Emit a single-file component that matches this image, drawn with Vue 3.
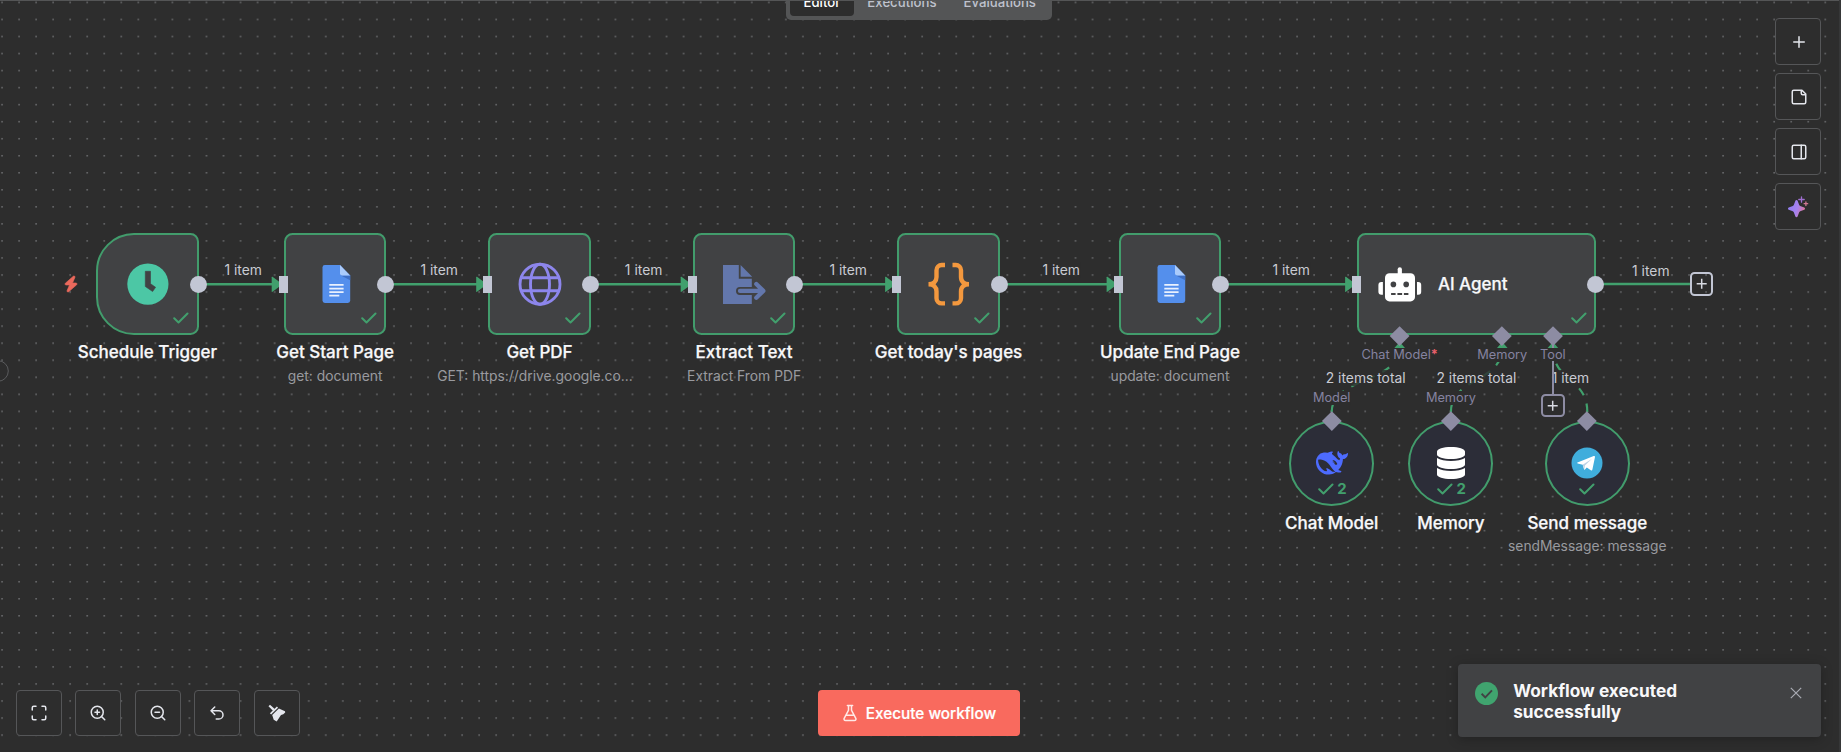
<script setup>
const nodes = [
  { id: 'schedule', x: 96.4, icon: 'clock', title: 'Schedule Trigger', trigger: true },
  { id: 'start', x: 284, icon: 'doc', title: 'Get Start Page', sub: 'get: document', input: true },
  { id: 'pdf', x: 488.4, icon: 'globe', title: 'Get PDF', sub: 'GET: https://drive.google.co...', input: true, clipped: true },
  { id: 'extract', x: 693, icon: 'export', title: 'Extract Text', sub: 'Extract From PDF', input: true },
  { id: 'today', x: 897.4, icon: 'braces', title: "Get today's pages", input: true },
  { id: 'end', x: 1118.9, icon: 'doc', title: 'Update End Page', sub: 'update: document', input: true },
]
const edges = [
  { from: 198.8, to: 284, label: 243.2 },
  { from: 386.2, to: 488.5, label: 439.2 },
  { from: 590.7, to: 693, label: 643.6 },
  { from: 795.2, to: 897.4, label: 848.2 },
  { from: 999.6, to: 1118.9, label: 1061.2 },
  { from: 1221.1, to: 1357.4, label: 1291.2 },
]
const ports = [
  { x: 1399.7, label: 'Chat Model', required: true },
  { x: 1502.3, label: 'Memory' },
  { x: 1552.9, label: 'Tool' },
]
const subNodes = [
  { id: 'chat', x: 1331.7, icon: 'whale', title: 'Chat Model', port: 'Model', runs: 2 },
  { id: 'memory', x: 1450.9, icon: 'database', title: 'Memory', port: 'Memory', runs: 2 },
  { id: 'send', x: 1587.3, icon: 'telegram', title: 'Send message', sub: 'sendMessage: message' },
]
const edgeLabels = [
  { x: 1365.7, y: 378, text: '2 items total' },
  { x: 1476.4, y: 378, text: '2 items total' },
  { x: 1570.4, y: 378, text: '1 item' },
  { x: 1650.8, y: 270.5, text: '1 item' },
]
const tabs = ['Editor', 'Executions', 'Evaluations']
</script>

<template>
  <main class="editor">
    <svg class="layer" width="1841" height="752">
      <defs>
        <pattern id="dots" x="1" y="1.6" width="17.04" height="17.04" patternUnits="userSpaceOnUse">
          <rect x="0.2" y="0.2" width="1.7" height="1.2" fill="#747578" />
        </pattern>
      </defs>
      <rect width="1841" height="751" fill="url(#dots)" />
      <circle cx="-2" cy="371" r="10.3" fill="#2d2d2d" stroke="#5a5b5d" />
      <g fill="none" stroke="#41a06d" stroke-width="2.4">
        <path v-for="e in edges" :key="e.from" :d="`M${e.from} 284.2H${e.to - 10}`" />
        <path d="M1595.8 284H1690" />
        <g stroke-dasharray="8.5 8.5" stroke-width="2.2">
          <path d="M1331.7 412C1331.7 377 1399.7 383 1399.7 347" />
          <path d="M1450.9 412C1450.9 377 1502.3 383 1502.3 347" />
          <path d="M1587.3 412C1587.3 377 1552.9 383 1552.9 347" />
        </g>
      </g>
      <g fill="#41a06d">
        <path v-for="e in edges" :key="e.to" :d="`M${e.to - 12.3} 277.2q0-.8.8-.4l8.4 6.2v2.6l-8.4 6.2q-.8.4-.8-.4z`" />
        <path v-for="p in ports" :key="p.x" :d="`M${p.x - 5.3} 348l5.3-6 5.3 6z`" />
      </g>
    </svg>

    <span v-for="e in edges" :key="e.label" class="edge-label" :style="{ left: e.label + 'px', top: '270px' }">1 item</span>
    <span v-for="l in edgeLabels" :key="l.x" class="edge-label" :style="{ left: l.x + 'px', top: l.y + 'px' }">{{ l.text }}</span>

    <svg class="bolt" viewBox="0 0 448 512"><path fill="#ea695c" stroke="#ea695c" stroke-width="20" d="M349.4 44.6c5.9-13.7 1.5-29.7-10.6-38.5s-28.6-8-39.9 1.8l-256 224c-10 8.8-13.6 22.9-8.9 35.3S50.7 288 64 288H175.5L98.6 467.4c-5.9 13.7-1.5 29.7 10.6 38.5s28.6 8 39.9-1.8l256-224c10-8.8 13.6-22.9 8.9-35.3s-16.6-20.7-30-20.7H272.5L349.4 44.6z" /></svg>

    <section v-for="n in nodes" :key="n.id" class="node" :class="{ trigger: n.trigger }" :style="{ left: n.x + 'px' }">
      <div class="box">
        <svg v-if="n.icon === 'clock'" class="icon" viewBox="0 0 44 44">
          <circle cx="21.9" cy="22.1" r="20.6" fill="#4cc7a5" />
          <path d="M19.3 9.3h5.2v12.4l5.1 3.6-3 4.2-7.3-5z" fill="#414244" stroke="#414244" stroke-width=".6" stroke-linejoin="round" />
        </svg>
        <svg v-else-if="n.icon === 'doc'" class="icon doc" viewBox="0 0 44 44">
          <path d="M10.9 3H26l10.2 10.5V38.5a2.4 2.4 0 0 1-2.4 2.4H10.9a2.4 2.4 0 0 1-2.4-2.4V5.4A2.4 2.4 0 0 1 10.9 3z" fill="#548fec" />
          <path d="M27 13.5l9.2 4.7v-4.7z" fill="#3e6fc4" />
          <path d="M26 3l10.2 10.5h-8A2.2 2.2 0 0 1 26 11.3z" fill="#aacbfb" />
          <path d="M15.3 22.9h14.3M15.3 26.6h14.3M15.3 30.2h14.3M15.3 33.7h10" stroke="#e9f1fe" stroke-width="1.7" />
        </svg>
        <svg v-else-if="n.icon === 'globe'" class="icon" viewBox="0 0 44 44" fill="none" stroke="#8d86ec" stroke-width="2.9">
          <circle cx="22" cy="22.2" r="20" /><ellipse cx="22" cy="22.2" rx="9.5" ry="20" /><path d="M3.3 15.7h37.4M3.3 28.8h37.4" />
        </svg>
        <svg v-else-if="n.icon === 'export'" class="icon" viewBox="0 0 48 44">
          <path d="M3 3h15.8v13.7h13V42H3z" fill="#6377ac" />
          <path d="M20.6 3l11.6 11.8H20.6z" fill="#6377ac" />
          <path d="M20 28.9h22M37 22.3l6.8 6.6-6.8 6.6" fill="none" stroke="#414244" stroke-width="8" stroke-linecap="round" />
          <path d="M20 28.9h22M36.3 22l7 6.9-7 6.9" fill="none" stroke="#6377ac" stroke-width="4.3" stroke-linecap="round" stroke-linejoin="round" />
        </svg>
        <svg v-else-if="n.icon === 'braces'" class="icon" viewBox="0 0 44 44" fill="none" stroke="#f3983e" stroke-width="4.4">
          <path d="M18 3h-3.3a5.2 5.2 0 0 0-5.2 5.2V15c0 4.5-3 7.2-8 7.2 5 0 8 2.7 8 7.2v6.8a5.2 5.2 0 0 0 5.2 5.2H18M25.5 3h3.3a5.2 5.2 0 0 1 5.2 5.2V15c0 4.5 3 7.2 8 7.2-5 0-8 2.7-8 7.2v6.8a5.2 5.2 0 0 1-5.2 5.2h-3.3" />
        </svg>
        <svg class="check" viewBox="0 0 16 12"><path d="M1.2 6.2l4.3 4.3 9-9" /></svg>
      </div>
      <i v-if="n.input" class="handle-in"></i>
      <i class="handle-out"></i>
      <div class="caption">
        <h3>{{ n.title }}</h3>
        <p v-if="n.sub" :class="{ clipped: n.clipped }">{{ n.sub }}</p>
      </div>
    </section>

    <section class="node agent">
      <div class="box">
        <svg class="robot" viewBox="0 0 44 36" fill="#fff">
          <path d="M19.7 2.3a2.1 2.1 0 0 1 4.2 0V8h-4.2z" />
          <rect x="7" y="6.2" width="30" height="28.2" rx="4.5" />
          <path d="M4.9 15v12.8H3.4A3 3 0 0 1 .4 24.8V18a3 3 0 0 1 3-3zM39 15v12.8h1.2a3 3 0 0 0 3-3V18a3 3 0 0 0-3-3z" />
          <g fill="#414244"><circle cx="15.4" cy="17.4" r="2.8" /><circle cx="28.2" cy="17.4" r="2.8" /><path d="M13.1 26h4.5v2h-4.5zM19.4 26h4.7v2h-4.7zM25.9 26h4.5v2h-4.5z" /></g>
        </svg>
        <h3>AI Agent</h3>
        <svg class="check" viewBox="0 0 16 12"><path d="M1.2 6.2l4.3 4.3 9-9" /></svg>
      </div>
      <i class="handle-in"></i>
      <i class="handle-out"></i>
    </section>

    <div v-for="p in ports" :key="p.label" class="port" :style="{ left: p.x + 'px' }">
      <i class="diamond"></i>
      <span>{{ p.label }}<b v-if="p.required">*</b></span>
    </div>

    <div class="add add-main"><svg viewBox="0 0 24 24"><path d="M12 7v10M7 12h10" /></svg></div>
    <i class="tool-line upper"></i>
    <i class="tool-line lower"></i>
    <div class="add add-tool"><svg viewBox="0 0 24 24"><path d="M12 7v10M7 12h10" /></svg></div>

    <section v-for="s in subNodes" :key="s.id" class="sub-node" :style="{ left: s.x + 'px' }">
      <span v-if="s.port" class="sub-port">{{ s.port }}</span>
      <div class="disc">
        <svg v-if="s.icon === 'whale'" class="sub-icon" viewBox="0 0 24 24" fill="#4d6bfe"><path d="M23.748 4.482c-.254-.124-.364.113-.512.234-.051.039-.094.09-.137.136-.372.397-.806.657-1.373.626-.829-.046-1.537.214-2.163.848-.133-.782-.575-1.248-1.247-1.548-.352-.156-.708-.311-.955-.65-.172-.241-.219-.51-.305-.774-.055-.16-.11-.323-.293-.35-.2-.031-.278.136-.356.276-.313.572-.434 1.202-.422 1.84.027 1.436.633 2.58 1.838 3.393.137.093.172.187.129.323-.082.28-.18.552-.266.833-.055.179-.137.217-.329.14a5.526 5.526 0 01-1.736-1.18c-.857-.828-1.631-1.742-2.597-2.458a11.365 11.365 0 00-.689-.471c-.985-.957.13-1.743.388-1.836.27-.098.093-.432-.779-.428-.872.004-1.67.295-2.687.684a3.055 3.055 0 01-.465.137 9.597 9.597 0 00-2.883-.102c-1.885.21-3.39 1.102-4.497 2.623C.082 8.606-.231 10.684.152 12.85c.403 2.284 1.569 4.175 3.36 5.653 1.858 1.533 3.997 2.284 6.438 2.14 1.482-.085 3.133-.284 4.994-1.86.47.234.962.327 1.78.397.63.059 1.236-.03 1.705-.128.735-.156.684-.837.419-.961-2.155-1.004-1.682-.595-2.113-.926 1.096-1.296 2.746-2.642 3.392-7.003.05-.347.007-.565 0-.845-.004-.17.035-.237.23-.256a4.173 4.173 0 001.545-.475c1.396-.763 1.96-2.015 2.093-3.517.02-.23-.004-.467-.247-.588zM11.581 18c-2.089-1.642-3.102-2.183-3.52-2.16-.392.024-.321.471-.235.763.09.288.207.486.371.739.114.167.192.416-.113.603-.673.416-1.842-.14-1.897-.167-1.361-.802-2.5-1.86-3.301-3.307-.774-1.393-1.224-2.887-1.298-4.482-.02-.386.093-.522.477-.592a4.696 4.696 0 011.529-.039c2.132.312 3.946 1.265 5.468 2.774.868.86 1.525 1.887 2.202 2.891.72 1.066 1.494 2.082 2.48 2.914.348.292.625.514.891.677-.802.09-2.14.11-3.054-.614zm1-6.44a.306.306 0 01.415-.287.302.302 0 01.2.288.306.306 0 01-.31.307.303.303 0 01-.304-.308zm3.11 1.596c-.2.081-.399.151-.59.16a1.245 1.245 0 01-.798-.254c-.274-.23-.47-.358-.552-.758a1.73 1.73 0 01.016-.588c.07-.327-.008-.537-.239-.727-.187-.156-.426-.199-.688-.199a.559.559 0 01-.254-.078c-.11-.054-.2-.19-.114-.358.028-.054.16-.186.192-.21.356-.202.767-.136 1.146.016.352.144.618.408 1.001.782.391.451.462.576.685.914.176.265.336.537.445.848.067.195-.019.354-.25.452z" /></svg>
        <svg v-else-if="s.icon === 'database'" class="sub-icon" viewBox="0 0 448 512" fill="#fff"><path d="M448 73.143v45.714C448 159.143 347.667 192 224 192S0 159.143 0 118.857V73.143C0 32.857 100.333 0 224 0s224 32.857 224 73.143zM448 176v102.857C448 319.143 347.667 352 224 352S0 319.143 0 278.857V176c48.125 33.143 136.208 48.572 224 48.572S399.874 209.143 448 176zm0 160v102.857C448 479.143 347.667 512 224 512S0 479.143 0 438.857V336c48.125 33.143 136.208 48.572 224 48.572S399.874 369.143 448 336z" /></svg>
        <svg v-else class="sub-icon" viewBox="0 0 32 32"><circle cx="16" cy="16" r="15.5" fill="#40addc" /><path d="M6.5 15.6L22.7 9.1c.9-.3 1.5.2 1.2 1.4L21.4 22.6c-.2 1-.9 1.2-1.6.7l-4-2.9-1.9 2c-.4.4-.8.3-.9-.2l-1.3-4.5-5-1.3c-.9-.3-.9-.5-.2-.8z" fill="#fff" /><path d="M11.7 17.7l9.3-6-7.1 6.9-.5 3.6z" fill="#bdd3e6" /></svg>
        <div class="runs" :class="{ counted: s.runs }">
          <svg viewBox="0 0 16 12"><path d="M1.2 6.2l4.3 4.3 9-9" /></svg>
          <span v-if="s.runs">{{ s.runs }}</span>
        </div>
      </div>
      <i class="diamond"></i>
      <div class="caption">
        <h3>{{ s.title }}</h3>
        <p v-if="s.sub">{{ s.sub }}</p>
      </div>
    </section>

    <nav class="tabs">
      <span v-for="(t, i) in tabs" :key="t" :class="{ active: i === 0 }">{{ t }}</span>
    </nav>
    <i class="top-line"></i>
    <i class="right-line"></i>

    <aside class="side-tools">
      <button><svg viewBox="0 0 24 24"><path d="M5 12h14M12 5v14" /></svg></button>
      <button><svg viewBox="0 0 24 24"><path d="M16 3H5a2 2 0 0 0-2 2v14a2 2 0 0 0 2 2h14a2 2 0 0 0 2-2V8zM15 3v4a2 2 0 0 0 2 2h4" /></svg></button>
      <button><svg viewBox="0 0 24 24"><rect x="3" y="3" width="18" height="18" rx="2" /><path d="M15 3v18" /></svg></button>
      <button>
        <svg class="sparkle" viewBox="0 0 22 22">
          <defs><linearGradient id="spark" x1="0" y1="0.3" x2="1" y2="0.6"><stop offset="0" stop-color="#8f7df0" /><stop offset=".55" stop-color="#a682ee" /><stop offset="1" stop-color="#dd7697" /></linearGradient></defs>
          <path fill="url(#spark)" d="M9.5 4c.5 0 .9.3 1.1.8l1.6 4.1c.2.5.5.8 1 1l4.1 1.6c1 .4 1 1.9 0 2.3l-4.1 1.5c-.5.2-.8.5-1 1l-1.6 4.1c-.4 1-1.8 1-2.2 0l-1.6-4.1c-.2-.5-.5-.8-1-1l-4.1-1.5c-1-.4-1-1.900 0-2.3l4.1-1.6c.5-.2.8-.5 1-1l1.6-4.1c.2-.5.6-.8 1.1-.8z" />
          <path d="M14.5.8v5.4M11.8 3.5h5.4" stroke="#9f6fd0" stroke-width="1.3" fill="none" />
          <path d="M18.9 5.9v3.6M17.1 7.7h3.6" stroke="#d07792" stroke-width="1.3" fill="none" />
        </svg>
      </button>
    </aside>

    <footer class="zoom-tools">
      <button><svg viewBox="0 0 24 24"><path d="M8 3H5a2 2 0 0 0-2 2v3M21 8V5a2 2 0 0 0-2-2h-3M3 16v3a2 2 0 0 0 2 2h3M16 21h3a2 2 0 0 0 2-2v-3" /></svg></button>
      <button><svg viewBox="0 0 24 24"><circle cx="11" cy="11" r="8" /><path d="M21 21l-4.35-4.35M11 8v6M8 11h6" /></svg></button>
      <button><svg viewBox="0 0 24 24"><circle cx="11" cy="11" r="8" /><path d="M21 21l-4.35-4.35M8 11h6" /></svg></button>
      <button><svg viewBox="0 0 24 24"><path d="M9 14L4 9l5-5M4 9h10.5a5.5 5.5 0 0 1 0 11H11" /></svg></button>
      <button>
        <svg class="broom" viewBox="0 0 20 20">
          <path d="M1.5 3.2L3 1.7l5 4.5-1.8 1.8z" />
          <path d="M2.9 10.2l7-6.7 1.2 1.2-7 6.7z" />
          <path d="M5.2 12.1l6.7-6.5 6.1 2.7.2 1.3-1.9 1.6-2.3.8-4.3 6.6-3-1.9z" />
        </svg>
      </button>
    </footer>

    <button class="execute">
      <svg viewBox="0 0 24 24"><path d="M14 2v6a2 2 0 0 0 .245.96l5.51 10.08A2 2 0 0 1 18 22H6a2 2 0 0 1-1.755-2.96l5.51-10.08A2 2 0 0 0 10 8V2M6.453 15h11.094M8.5 2h7" /></svg>
      <span>Execute workflow</span>
    </button>

    <div class="toast">
      <svg class="ok" viewBox="0 0 24 24"><circle cx="12" cy="12" r="12" fill="#40a46f" /><path d="M6.9 12.3l3.8 3.8 7-7.4" fill="none" stroke="#414244" stroke-width="2" /></svg>
      <h2>Workflow executed successfully</h2>
      <svg class="close" viewBox="0 0 12 12"><path d="M.8.8l10.4 10.4M11.2.8L.8 11.2" fill="none" stroke="#a9abb3" stroke-width="1.2" /></svg>
    </div>
  </main>
</template>

<style>
body {
  background: #2d2d2d;
}
</style>

<style scoped>
.editor {
  position: relative;
  width: 1841px;
  height: 752px;
  overflow: hidden;
  background: #2d2d2d;
  color: #f8f8fa;
  font-family: Inter, "Liberation Sans", sans-serif;
}
.editor * {
  box-sizing: border-box;
}
i {
  display: block;
}
h2,
h3,
p {
  margin: 0;
}
.layer {
  position: absolute;
  left: 0;
  top: 0;
}
.edge-label {
  position: absolute;
  transform: translate(-50%, -50%);
  font-size: 13.85px;
  line-height: 16px;
  white-space: nowrap;
  color: #c9cbd3;
  background: rgba(45, 45, 45, 0.8);
}
.bolt {
  position: absolute;
  left: 64px;
  top: 275.5px;
  width: 14px;
  height: 16px;
  overflow: visible;
}
.node {
  position: absolute;
  top: 233.2px;
  width: 102.24px;
  height: 102.24px;
}
.box {
  position: relative;
  display: flex;
  align-items: center;
  justify-content: center;
  width: 100%;
  height: 100%;
  border: 2px solid #429c6c;
  border-radius: 8.5px;
  background: #414244;
}
.trigger .box {
  border-radius: 38px 8.5px 8.5px 38px;
}
.icon {
  height: 44px;
}
.doc {
  margin-left: 2px;
}
.check {
  position: absolute;
  right: 7.4px;
  bottom: 9px;
  width: 16px;
  height: 12px;
}
.check path,
.runs path {
  fill: none;
  stroke: #429f6d;
  stroke-width: 2;
  stroke-linecap: round;
  stroke-linejoin: round;
}
.handle-in {
  position: absolute;
  left: -5px;
  top: 42.8px;
  width: 9px;
  height: 16.6px;
  background: #c2c6d4;
}
.handle-out {
  position: absolute;
  right: -8.2px;
  top: 42.5px;
  width: 17.2px;
  height: 17.2px;
  border-radius: 50%;
  background: #c2c6d4;
}
.caption {
  position: absolute;
  left: 50%;
  display: flex;
  flex-direction: column;
  align-items: center;
  transform: translateX(-50%);
  white-space: nowrap;
}
.node .caption {
  top: 107.5px;
}
h3 {
  font-size: 17px;
  line-height: 22px;
  font-weight: 500;
  -webkit-text-stroke: 0.25px currentColor;
}
p {
  margin-top: 3px;
  font-size: 13.85px;
  line-height: 20px;
  color: #999a9f;
}
.clipped {
  margin-right: 9px;
}
.agent {
  left: 1357.4px;
  width: 238.56px;
}
.agent .box {
  justify-content: flex-start;
}
.robot {
  width: 44px;
  height: 36px;
  margin-left: 18.5px;
  margin-top: 1px;
}
.agent h3 {
  margin-left: 16px;
}
.port {
  position: absolute;
  top: 328.6px;
  display: flex;
  flex-direction: column;
  align-items: center;
  transform: translateX(-50%);
}
.diamond {
  width: 13.7px;
  height: 13.7px;
  background: #8d8ca3;
  transform: rotate(45deg);
}
.port span,
.sub-port {
  font-size: 12.78px;
  line-height: 14px;
  color: #8583a0;
  background: #2d2d2d;
  white-space: nowrap;
}
.port span {
  margin-top: 5.5px;
}
.port b {
  font-weight: 700;
  color: #e8606b;
}
.add {
  position: absolute;
  width: 23.4px;
  height: 23.4px;
  border: 2px solid #c2c6d4;
  border-radius: 4.5px;
}
.add svg {
  display: block;
  width: 100%;
  height: 100%;
  fill: none;
  stroke: #d8dae2;
  stroke-width: 1.5;
}
.add svg path {
  transform: scale(1.24);
  transform-origin: center;
}
.add-main {
  left: 1690px;
  top: 272.2px;
}
.add-tool {
  left: 1541.4px;
  top: 393.7px;
  border-color: #8d8ca3;
  background: #2d2d2d;
}
.tool-line {
  position: absolute;
  left: 1552px;
  width: 2px;
  background: #8d8ca3;
}
.upper {
  top: 340px;
  height: 8px;
}
.lower {
  top: 361px;
  height: 33px;
}
.sub-node {
  position: absolute;
  top: 420.9px;
  width: 85.2px;
  margin-left: -42.6px;
}
.disc {
  display: flex;
  align-items: center;
  justify-content: center;
  height: 85.2px;
  border: 2px solid #429c6c;
  border-radius: 50%;
  background: #2c2d38;
}
.sub-icon {
  width: 32px;
  height: 32px;
}
.sub-node .diamond {
  position: absolute;
  left: 35.75px;
  top: -6.85px;
}
.runs {
  position: absolute;
  top: 59px;
  left: 0;
  right: 0;
  display: flex;
  align-items: center;
  justify-content: center;
  gap: 3.5px;
  height: 18px;
  font-size: 14.9px;
  font-weight: 700;
  color: #429f6d;
}
.counted {
  left: 1px;
}
.runs svg {
  width: 16px;
  height: 12px;
}
.sub-node .caption {
  top: 91px;
}
.sub-node p {
  margin-top: 2px;
}
.sub-port {
  position: absolute;
  top: -30.3px;
  left: 50%;
  transform: translateX(-50%);
}
.tabs {
  position: absolute;
  left: 786px;
  top: -14px;
  display: flex;
  width: 266px;
  height: 34px;
  padding: 4px;
  border-radius: 5px;
  background: #545556;
  font-size: 13.2px;
  font-weight: 500;
  line-height: 24.5px;
  color: #bfc2cd;
}
.tabs span {
  padding: 0 13.5px;
  border-radius: 4px;
}
.tabs .active {
  background: #2d2d2d;
  color: #fff;
}
.top-line {
  position: absolute;
  left: 0;
  top: 0;
  width: 1839px;
  height: 1px;
  background: #545556;
}
.right-line {
  position: absolute;
  right: 0;
  top: 0;
  width: 2px;
  height: 752px;
  background: #363738;
}
button {
  display: flex;
  align-items: center;
  justify-content: center;
  padding: 0;
  border: 1px solid #555658;
  border-radius: 4px;
  background: #2d2d2d;
  font-family: inherit;
}
.side-tools {
  position: absolute;
  left: 1775px;
  top: 18px;
  display: flex;
  flex-direction: column;
  gap: 8px;
}
.side-tools button,
.zoom-tools button {
  width: 46px;
  height: 47px;
}
.side-tools button {
  padding-left: 1px;
}
.zoom-tools button {
  height: 46px;
}
.side-tools svg,
.zoom-tools svg {
  width: 18px;
  height: 18px;
  fill: none;
  stroke: #e4e6ec;
  stroke-width: 2;
  stroke-linecap: round;
  stroke-linejoin: round;
}
.side-tools .sparkle {
  width: 22px;
  height: 22px;
  margin-right: 1px;
  stroke: none;
}
.zoom-tools .broom {
  width: 20px;
  height: 20px;
  fill: #e4e6ec;
  stroke: none;
}
.zoom-tools {
  position: absolute;
  left: 15.9px;
  top: 690px;
  display: flex;
  gap: 13.5px;
}
.execute {
  position: absolute;
  left: 818px;
  top: 690px;
  width: 201.5px;
  height: 46px;
  gap: 6.5px;
  border: 0;
  background: #f96a5e;
  color: #fff;
  font-size: 15.3px;
  font-weight: 500;
  -webkit-text-stroke: 0.2px currentColor;
}
.execute svg {
  width: 18px;
  height: 18px;
  fill: none;
  stroke: #ffe9e6;
  stroke-width: 2;
  stroke-linecap: round;
  stroke-linejoin: round;
}
.toast {
  position: absolute;
  left: 1458px;
  top: 664px;
  display: flex;
  align-items: flex-start;
  width: 363px;
  height: 73px;
  padding: 16px 19px 0 17px;
  border-radius: 4px;
  background: #414244;
  box-shadow: 0 2px 12px rgba(0, 0, 0, 0.25);
}
.ok {
  width: 23px;
  height: 23px;
  margin-top: 1.5px;
}
h2 {
  width: 200px;
  margin: 0 auto 0 15.2px;
  font-size: 17.3px;
  line-height: 21px;
  font-weight: 700;
}
.close {
  width: 12px;
  height: 12px;
  margin-top: 7px;
}
</style>
